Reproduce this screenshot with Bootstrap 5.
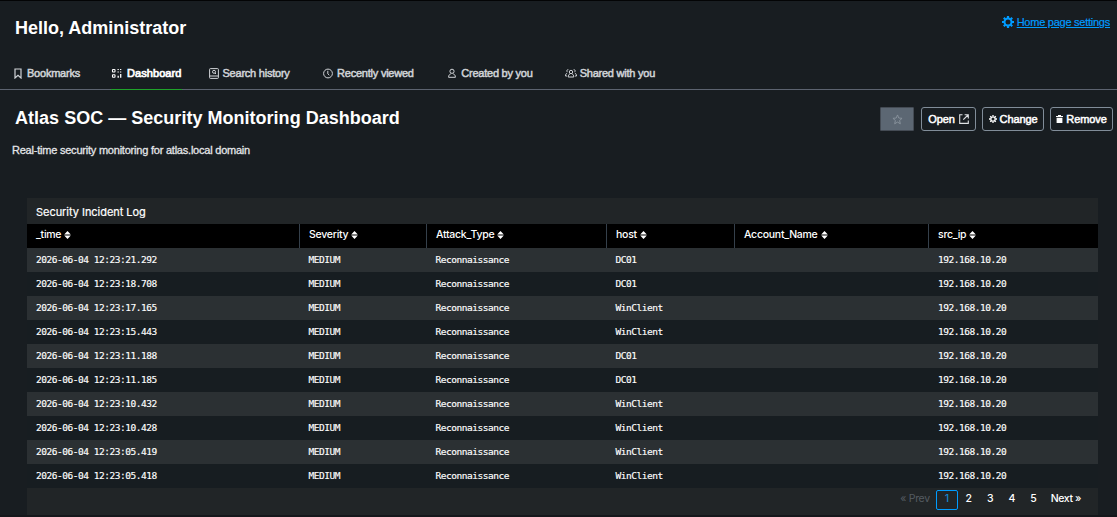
<!DOCTYPE html>
<html lang="en" data-bs-theme="dark">
<head>
<meta charset="utf-8">
<meta name="viewport" content="width=device-width, initial-scale=1">
<title>Home</title>
<link href="https://cdn.jsdelivr.net/npm/bootstrap@5.3.0/dist/css/bootstrap.min.css" rel="stylesheet">
<style>
html, body { height: 100%; overflow: hidden; }
body { background: #181d21; color: #fff; font: 11px/16px "Liberation Sans", Arial, sans-serif; border-top: 1px solid #030405; }
svg { display: block; flex: none; }
h1, h2 { font-size: 18px; font-weight: 700; line-height: 22px; }
.page-top { height: 56px; padding: 16px 7px 0 15px; }
.settings-link { color: #009cff; letter-spacing: -.25px; gap: 3px; margin-top: -3px; -webkit-text-stroke: .2px; }
.settings-link span { text-decoration: underline; }
.tabs { height: 32px; border-bottom: 1px solid #5c6370; box-sizing: content-box; }
.tabs .nav-link { color: #d0d3d7; padding: 8px 0 0; height: 33px; display: flex; gap: 5px; letter-spacing: -.23px; -webkit-text-stroke: .5px; }
.tabs .nav-link svg { margin-top: 3px; -webkit-text-stroke: 0; }
.tabs .active { color: #fff; border-bottom: 1px solid #1fa32a; letter-spacing: .08px; -webkit-text-stroke: .7px; }
.dash-head { height: 47px; padding: 17px 4px 0 15px; }
.dash-head h2 { letter-spacing: .02px; }
.tool { height: 24px; border: 1px solid #818d99; border-radius: 3px; color: #fff; font-size: 11px; line-height: 22px; padding: 0; display: flex; align-items: center; justify-content: center; letter-spacing: -.1px; -webkit-text-stroke: .5px; }
.tool:disabled { background: #5c6773; border-color: #444b54; border-radius: 1px; opacity: 1; }
.intro { padding-left: 12px; height: 61px; padding-top: 5px; color: #e3e5e8; letter-spacing: -.22px; -webkit-text-stroke: .3px; }
.panel { width: 1071px; margin-left: 27px; background: #212527; font-family: Inter, sans-serif; }
.panel-name { height: 26px; padding: 6px 9px 0; line-height: 17px; font-size: 11px; letter-spacing: -.04px; -webkit-text-stroke: .2px; }
.log { table-layout: fixed; width: 1071px; border-collapse: separate; border-spacing: 0; }
.log th { height: 24px; padding: 0 8px 2px 9px; background: #000; border-right: 1px solid #35404b; font-weight: 500; font-size: 10.5px; letter-spacing: -.26px; line-height: 16px; }
.log th:last-child { border-right: 0; }
.log th svg { display: inline-block; margin-left: 3px; vertical-align: -1px; }
.log td { height: 24px; padding: 0 8px 0 9px; font: 9.5px/16px "DejaVu Sans Mono", monospace; letter-spacing: -.47px; color: #fff; -webkit-text-stroke: .15px; }
.log td:nth-child(n+2):nth-child(-n+4) { padding-left: 8.5px; }
.log tbody tr:nth-child(odd) td { background: #2b3033; }
.log tbody tr:nth-child(even) td { background: #171d21; }
.pager { height: 27px; padding: 2px 17px 0 0; font-size: 10.5px; font-weight: 500; line-height: 18px; }
.pager span { width: 21.6px; text-align: center; }
.pager .here { width: 22px; height: 20px; border: 1px solid #009cff; border-radius: 2px; color: #1688d2; line-height: 16px; }
.pager .off { color: #555c62; width: auto; margin-right: 6px; font-weight: 400; letter-spacing: -.3px; }
.pager .next { width: auto; margin-left: 6.5px; letter-spacing: -.4px; }
.page-end { height: 2px; background: #15171b; }
</style>
</head>
<body>
<header class="page-top d-flex justify-content-between align-items-start">
  <h1 class="m-0">Hello, Administrator</h1>
  <a href="#" class="settings-link d-flex align-items-center text-decoration-none">
    <svg width="12" height="12" viewBox="0 0 12 12"><circle cx="6" cy="6" r="3.5" fill="none" stroke="currentColor" stroke-width="2"/><path d="M6 0v2M6 10v2M0 6h2M10 6h2M1.8 1.8l1.4 1.4M8.8 8.8l1.4 1.4M1.8 10.2l1.4-1.4M8.8 3.2l1.4-1.4" stroke="currentColor" stroke-width="2.2"/></svg>
    <span>Home page settings</span></a>
</header>
<nav class="tabs nav flex-nowrap">
  <a class="nav-link" href="#" style="margin-left:14px"><svg width="8" height="11" viewBox="0 0 8 11"><path d="M1 1h6v9L4 7.2 1 10z" fill="none" stroke="currentColor" stroke-width="1.2"/></svg>Bookmarks</a>
  <a class="nav-link active" href="#" style="margin-left:31px"><svg width="11" height="11" viewBox="0 0 11 11" fill="none" stroke="currentColor" stroke-width="1.1"><rect x="1.5" y="1.5" width="2.5" height="2.5" rx=".5"/><rect x="1.5" y="6.8" width="2.5" height="2.5" rx=".5"/><path d="M6.500 1.500h1.300M9 1.500h1.300M6.500 4h1.300M9 4h1.300"/><path d="M7.200 7.800v2M9.700 6v3.800" stroke-width="1.300"/></svg>Dashboard</a>
  <a class="nav-link" href="#" style="margin-left:27px;gap:4px"><svg width="10" height="11" viewBox="0 0 10 11" fill="none" stroke="currentColor"><rect x=".6" y=".6" width="8.8" height="9.8" rx=".8"/><circle cx="5" cy="3.8" r="1.5"/><path d="M6 5l1 1M.6 8h8.8"/></svg>Search history</a>
  <a class="nav-link" href="#" style="margin-left:33.5px;gap:4px"><svg width="10" height="11" viewBox="0 0 10 11" fill="none" stroke="currentColor"><circle cx="5" cy="5.5" r="4.4"/><path d="M4.8 2.8v3l1.5 1.4"/></svg>Recently viewed</a>
  <a class="nav-link" href="#" style="margin-left:34.5px"><svg width="8" height="11" viewBox="0 0 8 11" fill="none" stroke="currentColor"><circle cx="4" cy="3.3" r="2.1"/><path d="M2.8 5.8C1.2 6.5.7 7.4.6 9.3h6.8C7.3 7.4 6.8 6.5 5.2 5.8"/></svg>Created by you</a>
  <a class="nav-link" href="#" style="margin-left:32px;gap:3px"><svg width="12" height="11" viewBox="0 0 12 11" fill="none" stroke="currentColor"><circle cx="6" cy="4" r="1.7"/><path d="M5 5.8C3.7 6.5 3.3 7.4 3.2 9h5.6C8.7 7.4 8.3 6.5 7 5.8M3.3 1.6a1.3 1.3 0 0 0-.8 2.4M2.2 5C1 5.5.6 6.5.5 8H2M8.7 1.6a1.3 1.3 0 0 1 .8 2.4M9.8 5c1.2.5 1.6 1.5 1.7 3H10"/></svg>Shared with you</a>
</nav>
<section class="dash-head d-flex justify-content-between align-items-start">
  <h2 class="m-0">Atlas SOC — Security Monitoring Dashboard</h2>
  <div class="d-flex">
    <button class="btn tool" disabled aria-label="Favourite" style="width:34px;margin-right:7px"><svg width="11" height="11" viewBox="0 0 12 12"><path d="M6 1l1.4 3.4 3.6.3-2.7 2.4.8 3.6L6 8.8l-3.1 1.9.8-3.6L1 4.7l3.6-.3z" fill="none" stroke="#8a949e"/></svg></button>
    <button class="btn tool" style="width:55px;margin-right:6px;gap:4px">Open<svg width="10" height="10" viewBox="0 0 10 10" fill="none" stroke="#dfe2e5"><path d="M3.5.8H.7v8.6h8.6V6.5M5.6.8h3.7v3.7M9 1L4.3 5.7" stroke-width="1.1"/></svg></button>
    <button class="btn tool" style="width:62px;margin-right:6px;gap:3px"><svg width="8" height="8" viewBox="0 0 12 12"><circle cx="6" cy="6" r="3.3" fill="none" stroke="#fff" stroke-width="2"/><path d="M6 0v2M6 10v2M0 6h2M10 6h2M1.8 1.8l1.4 1.4M8.8 8.8l1.4 1.4M1.8 10.2l1.4-1.4M8.8 3.2l1.4-1.4" stroke="#fff" stroke-width="2"/></svg>Change</button>
    <button class="btn tool" style="width:63px;gap:3px"><svg width="7" height="8" viewBox="0 0 7 8"><path d="M0 1h2V0h3v1h2v1H0zM.6 2.7h5.8V8H.6z" fill="#fff"/></svg>Remove</button>
  </div>
</section>
<p class="intro m-0">Real-time security monitoring for atlas.local domain</p>
<main class="panel">
  <div class="panel-name">Security Incident Log</div>
  <table class="log">
    <colgroup><col style="width:273px"><col style="width:127px"><col style="width:180px"><col style="width:128px"><col style="width:194px"><col style="width:169px"></colgroup>
    <thead><tr id="heads"></tr></thead>
    <tbody id="rows"></tbody>
  </table>
  <div class="pager d-flex justify-content-end">
    <span class="off">« Prev</span><span class="here">1</span><span>2</span><span>3</span><span>4</span><span>5</span><span class="next">Next »</span>
  </div>
</main>
<div class="page-end"></div>
<script src="https://cdn.jsdelivr.net/npm/bootstrap@5.3.0/dist/js/bootstrap.bundle.min.js"></script>
<script>
const arrows = '<svg width="7" height="8" viewBox="0 0 7 8" fill="#fff"><path d="M3.5 0l3.300 3.400H.2zM3.500 8l3.300-3.400H.2z"/></svg>';
document.getElementById('heads').innerHTML = ['_time', 'Severity', 'Attack_Type', 'host', 'Account_Name', 'src_ip'].map(h => `<th>${h}${arrows}</th>`).join('');
const events = [['21.292', 'DC01'], ['18.708', 'DC01'], ['17.165', 'WinClient'], ['15.443', 'WinClient'], ['11.188', 'DC01'], ['11.185', 'DC01'], ['10.432', 'WinClient'], ['10.428', 'WinClient'], ['05.419', 'WinClient'], ['05.418', 'WinClient']];
document.getElementById('rows').innerHTML = events.map(([t, host]) => `<tr><td>2026-06-04 12:23:${t}</td><td>MEDIUM</td><td>Reconnaissance</td><td>${host}</td><td></td><td>192.168.10.20</td></tr>`).join('');
</script>
</body>
</html>
